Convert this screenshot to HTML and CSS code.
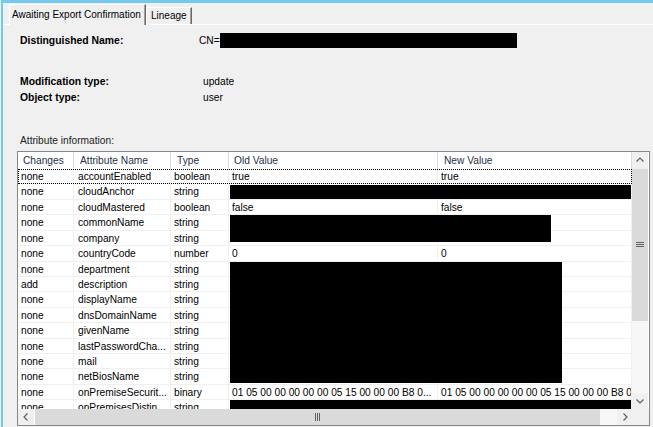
FILE: index.html
```html
<!DOCTYPE html>
<html>
<head>
<meta charset="utf-8">
<link rel="stylesheet" href="styles.css">
</head>
<body>
<div class="win">
  <div class="tabs">
    <div class="tab active">Awaiting Export Confirmation</div>
    <div class="tab">Lineage</div>
  </div>
  <div class="panel">
    <div class="info dn">
      <span class="lbl">Distinguished Name:</span>
      <span class="val">CN=<span class="redact cn"></span></span>
    </div>
    <div class="meta">
      <div class="info"><span class="lbl">Modification type:</span><span class="val pad">update</span></div>
      <div class="info"><span class="lbl">Object type:</span><span class="val pad">user</span></div>
    </div>
    <div class="caption">Attribute information:</div>
    <div class="list">
      <div class="listbody">
        <div class="grid">
          <div class="hdr">
            <div class="c c1">Changes</div>
            <div class="c c2">Attribute Name</div>
            <div class="c c3">Type</div>
            <div class="c c4">Old Value</div>
            <div class="c c5">New Value</div>
          </div>
          <div class="row focus"><div class="c c1">none</div><div class="c c2">accountEnabled</div><div class="c c3">boolean</div><div class="c c4">true</div><div class="c c5">true</div></div>
          <div class="row"><div class="c c1">none</div><div class="c c2">cloudAnchor</div><div class="c c3">string</div><div class="c c4"></div><div class="c c5"></div></div>
          <div class="row"><div class="c c1">none</div><div class="c c2">cloudMastered</div><div class="c c3">boolean</div><div class="c c4">false</div><div class="c c5">false</div></div>
          <div class="row"><div class="c c1">none</div><div class="c c2">commonName</div><div class="c c3">string</div><div class="c c4"></div><div class="c c5"></div></div>
          <div class="row"><div class="c c1">none</div><div class="c c2">company</div><div class="c c3">string</div><div class="c c4"></div><div class="c c5"></div></div>
          <div class="row"><div class="c c1">none</div><div class="c c2">countryCode</div><div class="c c3">number</div><div class="c c4">0</div><div class="c c5">0</div></div>
          <div class="row"><div class="c c1">none</div><div class="c c2">department</div><div class="c c3">string</div><div class="c c4"></div><div class="c c5"></div></div>
          <div class="row"><div class="c c1">add</div><div class="c c2">description</div><div class="c c3">string</div><div class="c c4"></div><div class="c c5"></div></div>
          <div class="row"><div class="c c1">none</div><div class="c c2">displayName</div><div class="c c3">string</div><div class="c c4"></div><div class="c c5"></div></div>
          <div class="row"><div class="c c1">none</div><div class="c c2">dnsDomainName</div><div class="c c3">string</div><div class="c c4"></div><div class="c c5"></div></div>
          <div class="row"><div class="c c1">none</div><div class="c c2">givenName</div><div class="c c3">string</div><div class="c c4"></div><div class="c c5"></div></div>
          <div class="row"><div class="c c1">none</div><div class="c c2">lastPasswordCha...</div><div class="c c3">string</div><div class="c c4"></div><div class="c c5"></div></div>
          <div class="row"><div class="c c1">none</div><div class="c c2">mail</div><div class="c c3">string</div><div class="c c4"></div><div class="c c5"></div></div>
          <div class="row"><div class="c c1">none</div><div class="c c2">netBiosName</div><div class="c c3">string</div><div class="c c4"></div><div class="c c5"></div></div>
          <div class="row"><div class="c c1">none</div><div class="c c2">onPremiseSecurit...</div><div class="c c3">binary</div><div class="c c4">01 05 00 00 00 00 00 05 15 00 00 00 B8 0...</div><div class="c c5">01 05 00 00 00 00 00 05 15 00 00 00 B8 07 00</div></div>
          <div class="row"><div class="c c1">none</div><div class="c c2">onPremisesDistin...</div><div class="c c3">string</div><div class="c c4"></div><div class="c c5"></div></div>
          <div class="redact r1"></div>
          <div class="redact r2"></div>
          <div class="redact r3"></div>
          <div class="redact r4"></div>
        </div>
        <div class="vscroll">
          <div class="sbtn"><svg width="16" height="16" viewBox="0 0 16 16"><path d="M4.5 9.5 L8 6 L11.5 9.5" fill="none" stroke="#606060" stroke-width="1.2"/></svg></div>
          <div class="vthumb"><svg width="8" height="6" viewBox="0 0 8 6"><path d="M0 0.5H8M0 2.5H8M0 4.5H8" stroke="#606060" stroke-width="1"/></svg></div>
          <div class="vtrack"></div>
          <div class="sbtn"><svg width="16" height="16" viewBox="0 0 16 16"><path d="M4.5 6.5 L8 10 L11.5 6.5" fill="none" stroke="#606060" stroke-width="1.2"/></svg></div>
        </div>
      </div>
      <div class="hscroll">
        <div class="sbtn"><svg width="16" height="16" viewBox="0 0 16 16"><path d="M9.5 4.5 L6 8 L9.5 11.5" fill="none" stroke="#606060" stroke-width="1.2"/></svg></div>
        <div class="hthumb"><svg width="6" height="8" viewBox="0 0 6 8"><path d="M0.5 0V8M2.5 0V8M4.5 0V8" stroke="#606060" stroke-width="1"/></svg></div>
        <div class="htrack"></div>
        <div class="sbtn"><svg width="16" height="16" viewBox="0 0 16 16"><path d="M6.5 4.5 L10 8 L6.5 11.5" fill="none" stroke="#606060" stroke-width="1.2"/></svg></div>
        <div class="corner"></div>
      </div>
    </div>
  </div>
</div>
</body>
</html>
```

FILE: styles.css
```css
html, body {
  margin: 0;
  padding: 0;
}
body {
  background: #f0f0f0;
  font-family: "Liberation Sans", Arial, sans-serif;
  font-size: 10.2px;
  color: #000;
  width: 653px;
  height: 427px;
  overflow: hidden;
}
.win {
  box-sizing: border-box;
  height: 427px;
  margin-left: 1px;
  border-left: 2px solid #74c9ee;
  border-top: 3px solid #74c9ee;
}
.tabs {
  display: flex;
  align-items: flex-end;
  height: 21px;
  padding-left: 6px;
}
.tab {
  box-sizing: border-box;
  height: 17px;
  padding: 0 4px 0 4px;
  line-height: 16px;
  font-size: 10px;
  border-top: 1px solid #fff;
  border-left: 1px solid #fff;
  border-right: 1px solid #696969;
  box-shadow: inset -1px 0 0 #a0a0a0;
  background: #f0f0f0;
  white-space: nowrap;
}
.tab.active {
  position: relative;
  z-index: 1;
  height: 21px;
  margin-bottom: -1px;
  width: 137px;
  padding-left: 2px;
  line-height: 20px;
}
.panel {
  border-top: 1px solid #fff;
  padding-left: 14px;
}
.info {
  display: flex;
  align-items: center;
  height: 15px;
  padding-left: 3px;
}
.dn {
  margin-top: 8px;
}
.lbl {
  width: 179px;
  flex: none;
  font-weight: bold;
  font-size: 10.4px;
}
.val {
  display: flex;
  align-items: center;
}
.val.pad {
  padding-left: 4px;
}
.meta {
  margin-top: 25px;
}
.meta .info {
  height: 16px;
}
.caption {
  margin-top: 30px;
  height: 12px;
  line-height: 12px;
  padding-left: 3px;
  color: #222;
}
.list {
  margin-top: 4px;
  width: 631px;
  border: 1px solid #828790;
  background: #fff;
}
.listbody {
  display: flex;
  height: 257px;
}
.grid {
  position: relative;
  width: 614px;
  height: 257px;
  overflow: hidden;
}
.hdr {
  display: flex;
  height: 17px;
  background: #fff;
  color: #1e2f4a;
}
.hdr .c {
  line-height: 17px;
  padding-left: 6px;
  border-right: 1px solid #dcdcdc;
}
.hdr .c1 {
  padding-left: 5px;
}
.hdr .c4 {
  padding-left: 5px;
}
.c {
  box-sizing: border-box;
  flex: none;
  white-space: nowrap;
  overflow: hidden;
}
.c1 { width: 56px; }
.c2 { width: 97px; }
.c3 { width: 58px; }
.c4 { width: 209px; }
.c5 { width: 194px; }
.row {
  box-sizing: border-box;
  display: flex;
  height: 15.43px;
  border-bottom: 1px solid #f0f0f0;
}
.row .c {
  line-height: 15px;
  padding-left: 3px;
  border-right: 1px solid #f0f0f0;
}
.row .c2 {
  padding-left: 4px;
}
.row.focus {
  outline: 1px dotted #000;
  outline-offset: -1px;
}
.redact {
  background: #000;
}
.cn {
  display: inline-block;
  width: 297px;
  height: 15px;
}
.grid .redact {
  position: absolute;
  left: 212px;
}
.r1 { top: 33px; width: 401px; height: 14px; }
.r2 { top: 63px; width: 321px; height: 27px; }
.r3 { top: 110px; width: 332px; height: 121px; }
.r4 { top: 248px; width: 401px; height: 12px; }
.vscroll {
  width: 16px;
  display: flex;
  flex-direction: column;
  background: #f0f0f0;
}
.sbtn {
  width: 16px;
  height: 16px;
  flex: none;
  background: #f0f0f0;
}
.sbtn svg {
  display: block;
}
.vthumb {
  height: 152px;
  margin-top: 1px;
  background: #dadada;
  display: flex;
  align-items: center;
  justify-content: center;
}
.vtrack {
  flex: 1;
  background: #f7f7f7;
}
.hscroll {
  display: flex;
  height: 16px;
}
.hthumb {
  width: 565px;
  margin-left: 1px;
  background: #dadada;
  display: flex;
  align-items: center;
  justify-content: center;
}
.htrack {
  flex: 1;
  background: #f7f7f7;
}
.corner {
  width: 16px;
  background: #f0f0f0;
}
```
